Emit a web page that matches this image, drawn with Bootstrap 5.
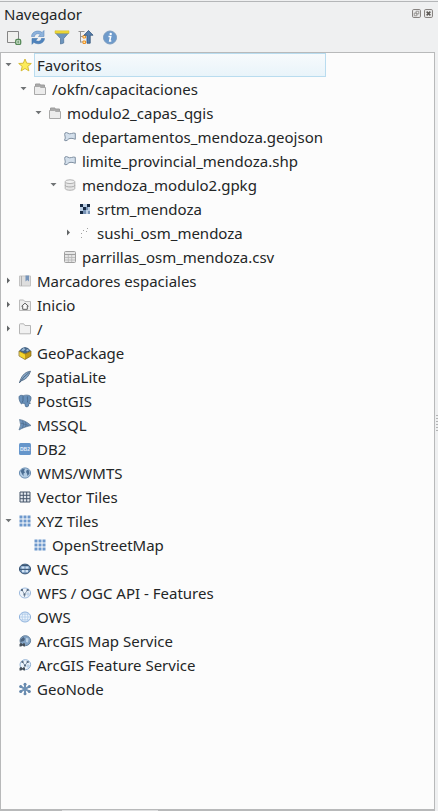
<!DOCTYPE html>
<html lang="es">
<head>
<meta charset="utf-8">
<meta name="viewport" content="width=device-width, initial-scale=1">
<title>Navegador</title>
<link href="https://cdn.jsdelivr.net/npm/bootstrap@5.3.0/dist/css/bootstrap.min.css" rel="stylesheet">
<style>
body{background:#eff0f1;color:#232627;font-family:"Noto Sans",sans-serif;font-size:15px;line-height:24px}
.panel{height:811px;padding-top:1px}
.panel-head{border-top:1px solid #b4b6b8;height:27px;padding:0 5px 0 4px}
.panel-tools{height:24px;padding:1px 0 0 6px;gap:8px}
.tool{width:16px;height:16px;flex:none}
.wins{gap:3px;padding-top:7px}
.win{width:9px;height:9px;flex:none}
.tree-box{width:435px;border:1px solid #b8b9ba;border-bottom-width:2px;background:#fcfcfc}
.trow{height:24px;white-space:nowrap}
.l1{padding-left:15px}.l2{padding-left:30px}.l3{padding-left:45px}.l4{padding-left:60px}
.arrow{width:15px;height:24px;flex:none}
.ico{width:14px;height:14px;margin:0 2px 1px;flex:none;overflow:visible}
.tlabel{border:1px solid transparent;padding-left:2px;height:24px;line-height:22px}
.tlabel.picked{width:292px;border-color:#b9dcef;background:linear-gradient(#f7fafc,#e9f4fa)}
.grip i{display:block;width:2px;height:1px;background:#b4b5b6;margin-bottom:2px}
.grip{width:2px;padding-top:363px}
.thumb{width:96px;height:1px;background:#dedfe0;left:62px;bottom:0}
</style>
<script src="https://cdn.jsdelivr.net/npm/bootstrap@5.3.0/dist/js/bootstrap.bundle.min.js"></script>
</head>
<body class="overflow-hidden">
<svg class="d-none">
<symbol id="down" viewBox="0 0 15 24"><path d="M4.5 10h6L7.5 13.2z" fill="#707375"/></symbol>
<symbol id="right" viewBox="0 0 15 24"><path d="M6 8.5v6L9 11.5z" fill="#606365"/></symbol>
<symbol id="star" viewBox="0 0 14 14"><path d="M7 1l1.7 4.2 4.6.3-3.5 2.9 1.1 4.5L7 10.5l-3.9 2.4 1.1-4.5L.7 5.5l4.6-.3z" fill="#fcec5a" stroke="#d3b72d" stroke-width=".9"/></symbol>
<symbol id="dir" viewBox="0 0 14 14"><path d="M2.5 5V2h4.5v1h4.5v2" fill="#aaa" stroke="#9c9c9c"/><path d="M1.5 4.5h5l1 1h5v7h-11z" fill="#ececec" stroke="#a9a9a9"/></symbol>
<symbol id="folder" viewBox="0 0 14 14"><path d="M1.5 2.5q0-.7.7-.7h3.5l1.2 1.7h5.6v8.3h-11z" fill="#f1f1f1" stroke="#b5b5b5"/></symbol>
<symbol id="poly" viewBox="0 0 14 14"><path d="M2 3Q3.500 2 5 3.200 6.500 4.300 8.500 3.500 10.500 2.700 12.300 3.300V9.300Q10 8.300 8 8.300 5.500 8.300 4.500 10 3 11.500 1.500 10.300 2.800 8 2 6 1.300 4.500 2 3z" fill="#d3dfeb" stroke="#8090a2"/></symbol>
<symbol id="db" viewBox="0 0 14 14"><path d="M2.200 4v6.500c0 2.300 9.600 2.300 9.600 0V4" fill="#e6e6e6" stroke="#b0b0b0"/><ellipse cx="7" cy="3.700" rx="4.800" ry="1.900" fill="#f2f2f2" stroke="#b0b0b0"/><path d="M2.200 7.300c0 2.200 9.600 2.200 9.600 0" fill="none" stroke="#aaa"/></symbol>
<symbol id="raster" viewBox="0 0 14 14"><path d="M2 2h10v10H2z" fill="#bccfe5"/><path d="M2 2h3v3H2zM9 2h3v3H9zM5 5h3v3H5zM2 9h3v3H2z" fill="#182b45"/><path d="M8 5h2v3H8zM5 8h3v4H5zM10 9h2v3h-2z" fill="#7893b5"/></symbol>
<symbol id="points" viewBox="0 0 14 14"><path d="M9 2h1v1H9zM5 4h1v1H5zM3 7h1v1H3zM3 11h1v1H3zM8 5h1v1H8z" fill="#a2a2a2"/></symbol>
<symbol id="table" viewBox="0 0 14 14"><rect x="1.500" y="1.500" width="11" height="11" rx="1" fill="#e6e6e6" stroke="#a0a0a0"/><path d="M2 4.500h10" stroke="#a0a0a0"/><path d="M2 7.500h10M2 10h10M5.300 5v7M8.700 5v7" stroke="#b5b5b5" stroke-width=".8"/></symbol>
<symbol id="book" viewBox="0 0 14 14"><path d="M1.500 2h11v10h-11z" fill="#dedede" stroke="#c3c3c3"/><path d="M3.500 2v10" stroke="#b0b0b0"/><path d="M7.500 1.500h3.500v6L9.200 6 7.500 7.500z" fill="#7795ba"/></symbol>
<symbol id="home" viewBox="0 0 14 14"><path d="M1.500 2h4l1.300 1.500h5.700v9h-11z" fill="#eee" stroke="#bbb"/><path d="M3.500 8.300L7 5.200 10.500 8.300M4.700 7.800v3.500h4.600V7.800" fill="#fff" stroke="#5e5e5e"/></symbol>
<symbol id="gpkg" viewBox="0 0 14 14"><path d="M1 5l6 2.500v6L1.500 10z" fill="#f3d52d"/><path d="M7 7.500L13 5v5l-6 3.500z" fill="#c29a18"/><path d="M1 5l3-3 3-1 3 1 3 3-6 2.800z" fill="#456485"/><path d="M3 4.500L5.500 2l2 1-2 2zM8 4l2-1 1 1.500-2 1z" fill="#9bb8d4"/><path d="M1 5v5l6 3.500 6-3.500V5L7 8z" fill="none" stroke="#806514" stroke-width=".7"/></symbol>
<symbol id="feather" viewBox="0 0 14 14"><path d="M1.500 12.700C3 7 6 2 12.500 1.200 11 6 8 9.500 3.500 10.700z" fill="#86a7c8" stroke="#4e6680" stroke-width=".8"/><path d="M1.500 12.700Q5 7 11 2.500" fill="none" stroke="#415a75" stroke-width=".8"/></symbol>
<symbol id="elephant" viewBox="0 0 14 14"><path d="M1 3.500C1 .8 4 1.200 5.300 1.700 7.500.8 13.200.6 13 4c0 2.700-1.300 4-2 4.700l1.500.5-2 1v1.900q-1.500 1.500-3 .3L6.800 9.500 4.700 9.200 3.500 10C2 8.500 1 5.500 1 3.500z" fill="#6890ba" stroke="#4c6d90" stroke-width=".8"/><path d="M5 2.200v4.500l-1 2M9.500 2.500c-.7 2 .8 3.500-.2 6" stroke="#3e5c7c" fill="none" stroke-width=".7"/></symbol>
<symbol id="mssql" viewBox="0 0 14 14"><path d="M1.500 1.500C5 2 9 3.800 13 7.500 9 8.500 5 9.500 1 12Q4 7 1.500 1.500z" fill="#6d92bb" stroke="#587594" stroke-width=".7"/><path d="M4.500 2.500q2 4 0 7.500M7.500 4q1.200 3 0 5M2.500 5l8 2.500" fill="none" stroke="#466583" stroke-width=".6"/></symbol>
<symbol id="db2" viewBox="0 0 14 14"><rect x="1" y="1" width="12" height="12" rx="1.500" fill="#6696cb"/><text x="7" y="8.800" text-anchor="middle" font-family="Liberation Sans,sans-serif" font-weight="bold" font-size="5" fill="#e4eefa">DB2</text></symbol>
<symbol id="globe" viewBox="0 0 14 14"><ellipse cx="7" cy="7" rx="5.600" ry="5.100" fill="#b3cce3" stroke="#6c90b5"/><path d="M2.500 5L4.500 3l2.500-.3L6 5l1 1.500-1.500 1v2.800L4 8zM9 3.500l2 1 .5 3-2 2.500L9 7.500 8 6z" fill="#4b6e93"/></symbol>
<symbol id="grid" viewBox="0 0 14 14"><path d="M2 2h10v10H2zM5.300 2v10M8.700 2v10M2 5.300h10M2 8.700h10" fill="#e4e9ef" stroke="#46566a"/></symbol>
<symbol id="tiles" viewBox="0 0 14 14"><path d="M1.500 1.500h3v3h-3zm4 0h3v3h-3zm4 0h3v3h-3zm-8 4h3v3h-3zm4 0h3v3h-3zm4 0h3v3h-3zm-8 4h3v3h-3zm4 0h3v3h-3zm4 0h3v3h-3z" fill="#6d98cc"/></symbol>
<symbol id="wcs" viewBox="0 0 14 14"><ellipse cx="7" cy="7" rx="5.600" ry="4.900" fill="#6e92b8" stroke="#405b7a"/><path d="M3.500 4.500h3v2.300h-3zM7.500 4.500h3v2.300h-3zM4 8h2.500v2.200H4zM7.500 8H10v2.200H7.500z" fill="#d3e4f5"/><path d="M1.500 7.400h11M3.500 3.500h7" stroke="#3c5876"/></symbol>
<symbol id="wfs" viewBox="0 0 14 14"><ellipse cx="7" cy="7" rx="5.600" ry="5" fill="#edf3fa" stroke="#a0bcde"/><path d="M4 4L6.500 8.300 9.500 4M6.500 8v3" fill="none" stroke="#8496aa" stroke-width=".9"/><path d="M3 3h2v2H3zM8.700 3h2v2h-2zM5.500 7.500h2v2h-2z" fill="#5b6e84"/><path d="M8 8h4M10 5.500v5" stroke="#a9c4e3" stroke-width=".8"/></symbol>
<symbol id="ows" viewBox="0 0 14 14"><ellipse cx="7" cy="7" rx="5.600" ry="5" fill="#edf4fc" stroke="#8db1dc"/><path d="M1.500 7h11M3 4.200h8M3 9.800h8M7 2v10M5 2.500q-2 4.500 0 9M9 2.500q2 4.500 0 9" fill="none" stroke="#a8c5e7" stroke-width=".7"/></symbol>
<symbol id="arcmap" viewBox="0 0 14 14"><ellipse cx="7.300" cy="6.700" rx="5.300" ry="5" fill="#83a4c6" stroke="#66839f"/><path d="M8 4l2.500.5L10 8.500 8 8z" fill="#bdd3e7"/><path d="M2.500 5.500l3-2.500 1.500 2-1 2-3.500 1z" fill="#4c647f"/><path d="M1.500 12.500V10L3 8.700l1.500 1.500L6 8.700 7 10v2.500H5.800l-1.300-1-1.300 1z" fill="#46505a"/></symbol>
<symbol id="arcfeat" viewBox="0 0 14 14"><ellipse cx="7.300" cy="6.700" rx="5.300" ry="5" fill="#ebf3fb" stroke="#8fb0d4"/><path d="M4.500 4L7 7.500l2.500-3.500" fill="none" stroke="#7f95ad" stroke-width=".9"/><path d="M3.500 3h2v2h-2zM8.700 3h2v2h-2zM6 6.500h2v2H6z" fill="#5b6e84"/><path d="M10 6v4M8 8h4" stroke="#a3c0df" stroke-width=".8"/><path d="M1.500 12.500V10L3 8.700l1.500 1.500L6 8.700 7 10v2.500H5.800l-1.300-1-1.300 1z" fill="#46505a"/></symbol>
<symbol id="node" viewBox="0 0 14 14"><path d="M7 1.500v11M2 4.200l10 5.600M2 9.800l10-5.600" stroke="#7092b5" stroke-width="2"/><g fill="#6789ad"><circle cx="7" cy="2.300" r="1.500"/><circle cx="7" cy="11.700" r="1.500"/><circle cx="2.700" cy="4.600" r="1.500"/><circle cx="11.300" cy="9.400" r="1.500"/><circle cx="2.700" cy="9.400" r="1.500"/><circle cx="11.300" cy="4.600" r="1.500"/></g></symbol>
</svg>
<div class="panel d-flex flex-column position-relative">
  <header class="panel-head d-flex justify-content-between">
    <span>Navegador</span>
    <span class="wins d-flex">
      <svg class="win" viewBox="0 0 10 10"><rect x=".6" y=".6" width="8.800" height="8.800" rx="1.300" fill="#ededed" stroke="#76726f"/><path d="M4.500 2.500h3v3h-3zM2.500 4.500h3v3h-3z" fill="#eee" stroke="#8b8886" stroke-width=".9"/></svg>
      <svg class="win" viewBox="0 0 10 10"><rect x=".6" y=".6" width="8.800" height="8.800" rx="1.300" fill="#ededed" stroke="#76726f"/><path d="M2.900 2.900l4.200 4.200m0-4.200L2.900 7.100" stroke="#5c5855" stroke-width="1.700"/></svg>
    </span>
  </header>
  <nav class="panel-tools d-flex">
    <svg class="tool" viewBox="0 0 16 16"><path d="M1.500 2.500h11v11h-11z" fill="#f0f0ee" stroke="#858585"/><rect x="9.700" y="10.500" width="5" height="5" rx="1.400" fill="#eef7ed" stroke="#568958" stroke-width="1.300"/><path d="M12.200 11.500v3m-1.500-1.500h3" stroke="#568958" stroke-width=".8"/></svg>
    <svg class="tool" viewBox="0 0 16 16"><path d="M1.500 7.500C2 1.800 9 .8 12 3.500l2-2v6H8.500l1.700-2C7.500 3.800 5 5 4.500 7.500z" fill="#8db2db" stroke="#5f8cbd" stroke-width=".6"/><path d="M14.500 9.500c-.5 5.500-7.500 6.500-10.500 3.800l-2 2V9.500h5.500l-1.700 2c2.700 1.700 5.200.5 5.700-2z" fill="#4f83bd" stroke="#4275ac" stroke-width=".6"/></svg>
    <svg class="tool" viewBox="0 0 16 16"><path d="M1.500 4L6.500 9.500V15l3.200-1V9.500L14.500 4z" fill="#6d95bd" stroke="#55799e" stroke-width=".8"/><path d="M1 1.800h14v2.500H1z" fill="#f0da35" stroke="#cdb72e" stroke-width=".5"/></svg>
    <svg class="tool" viewBox="0 0 16 16"><path d="M.5 2.500h6M2.500 2.500v11M2.500 7.500h3M2.500 13h3" stroke="#929292" fill="none"/><path d="M5 6.500h2.500V9H5zM5 12h2.500v2.500H5z" fill="#ffe8a2" stroke="#ef9125"/><path d="M10.500 1.500L15 6.200h-2.800v8H9v-8H6z" fill="#557fae" stroke="#2f5278" stroke-width=".8"/></svg>
    <svg class="tool" viewBox="0 0 16 16"><circle cx="8" cy="8.500" r="6.500" fill="#6d9acb" stroke="#7b9cc0"/><circle cx="8.700" cy="4.900" r="1.200" fill="#fff"/><path d="M6.500 7.500h2.200l-1 4.500h1.600" fill="none" stroke="#fff" stroke-width="1.500"/></svg>
  </nav>
  <div class="d-flex flex-grow-1">
    <main class="tree-box">
      <div class="trow d-flex align-items-center"><svg class="arrow"><use href="#down"/></svg><svg class="ico"><use href="#star"/></svg><span class="tlabel picked">Favoritos</span></div>
      <div class="trow l1 d-flex align-items-center"><svg class="arrow"><use href="#down"/></svg><svg class="ico"><use href="#dir"/></svg><span class="tlabel">/okfn/capacitaciones</span></div>
      <div class="trow l2 d-flex align-items-center"><svg class="arrow"><use href="#down"/></svg><svg class="ico"><use href="#dir"/></svg><span class="tlabel">modulo2_capas_qgis</span></div>
      <div class="trow l3 d-flex align-items-center"><span class="arrow"></span><svg class="ico"><use href="#poly"/></svg><span class="tlabel">departamentos_mendoza.geojson</span></div>
      <div class="trow l3 d-flex align-items-center"><span class="arrow"></span><svg class="ico"><use href="#poly"/></svg><span class="tlabel">limite_provincial_mendoza.shp</span></div>
      <div class="trow l3 d-flex align-items-center"><svg class="arrow"><use href="#down"/></svg><svg class="ico"><use href="#db"/></svg><span class="tlabel">mendoza_modulo2.gpkg</span></div>
      <div class="trow l4 d-flex align-items-center"><span class="arrow"></span><svg class="ico"><use href="#raster"/></svg><span class="tlabel">srtm_mendoza</span></div>
      <div class="trow l4 d-flex align-items-center"><svg class="arrow"><use href="#right"/></svg><svg class="ico"><use href="#points"/></svg><span class="tlabel">sushi_osm_mendoza</span></div>
      <div class="trow l3 d-flex align-items-center"><span class="arrow"></span><svg class="ico"><use href="#table"/></svg><span class="tlabel">parrillas_osm_mendoza.csv</span></div>
      <div class="trow d-flex align-items-center"><svg class="arrow"><use href="#right"/></svg><svg class="ico"><use href="#book"/></svg><span class="tlabel">Marcadores espaciales</span></div>
      <div class="trow d-flex align-items-center"><svg class="arrow"><use href="#right"/></svg><svg class="ico"><use href="#home"/></svg><span class="tlabel">Inicio</span></div>
      <div class="trow d-flex align-items-center"><svg class="arrow"><use href="#right"/></svg><svg class="ico"><use href="#folder"/></svg><span class="tlabel">/</span></div>
      <div class="trow d-flex align-items-center"><span class="arrow"></span><svg class="ico"><use href="#gpkg"/></svg><span class="tlabel">GeoPackage</span></div>
      <div class="trow d-flex align-items-center"><span class="arrow"></span><svg class="ico"><use href="#feather"/></svg><span class="tlabel">SpatiaLite</span></div>
      <div class="trow d-flex align-items-center"><span class="arrow"></span><svg class="ico"><use href="#elephant"/></svg><span class="tlabel">PostGIS</span></div>
      <div class="trow d-flex align-items-center"><span class="arrow"></span><svg class="ico"><use href="#mssql"/></svg><span class="tlabel">MSSQL</span></div>
      <div class="trow d-flex align-items-center"><span class="arrow"></span><svg class="ico"><use href="#db2"/></svg><span class="tlabel">DB2</span></div>
      <div class="trow d-flex align-items-center"><span class="arrow"></span><svg class="ico"><use href="#globe"/></svg><span class="tlabel">WMS/WMTS</span></div>
      <div class="trow d-flex align-items-center"><span class="arrow"></span><svg class="ico"><use href="#grid"/></svg><span class="tlabel">Vector Tiles</span></div>
      <div class="trow d-flex align-items-center"><svg class="arrow"><use href="#down"/></svg><svg class="ico"><use href="#tiles"/></svg><span class="tlabel">XYZ Tiles</span></div>
      <div class="trow l1 d-flex align-items-center"><span class="arrow"></span><svg class="ico"><use href="#tiles"/></svg><span class="tlabel">OpenStreetMap</span></div>
      <div class="trow d-flex align-items-center"><span class="arrow"></span><svg class="ico"><use href="#wcs"/></svg><span class="tlabel">WCS</span></div>
      <div class="trow d-flex align-items-center"><span class="arrow"></span><svg class="ico"><use href="#wfs"/></svg><span class="tlabel">WFS / OGC API - Features</span></div>
      <div class="trow d-flex align-items-center"><span class="arrow"></span><svg class="ico"><use href="#ows"/></svg><span class="tlabel">OWS</span></div>
      <div class="trow d-flex align-items-center"><span class="arrow"></span><svg class="ico"><use href="#arcmap"/></svg><span class="tlabel">ArcGIS Map Service</span></div>
      <div class="trow d-flex align-items-center"><span class="arrow"></span><svg class="ico"><use href="#arcfeat"/></svg><span class="tlabel">ArcGIS Feature Service</span></div>
      <div class="trow d-flex align-items-center"><span class="arrow"></span><svg class="ico"><use href="#node"/></svg><span class="tlabel">GeoNode</span></div>
    </main>
    <div class="grip ms-auto"><i></i><i></i><i></i><i></i><i></i><i></i></div>
  </div>
  <div class="thumb position-absolute"></div>
</div>
</body>
</html>
